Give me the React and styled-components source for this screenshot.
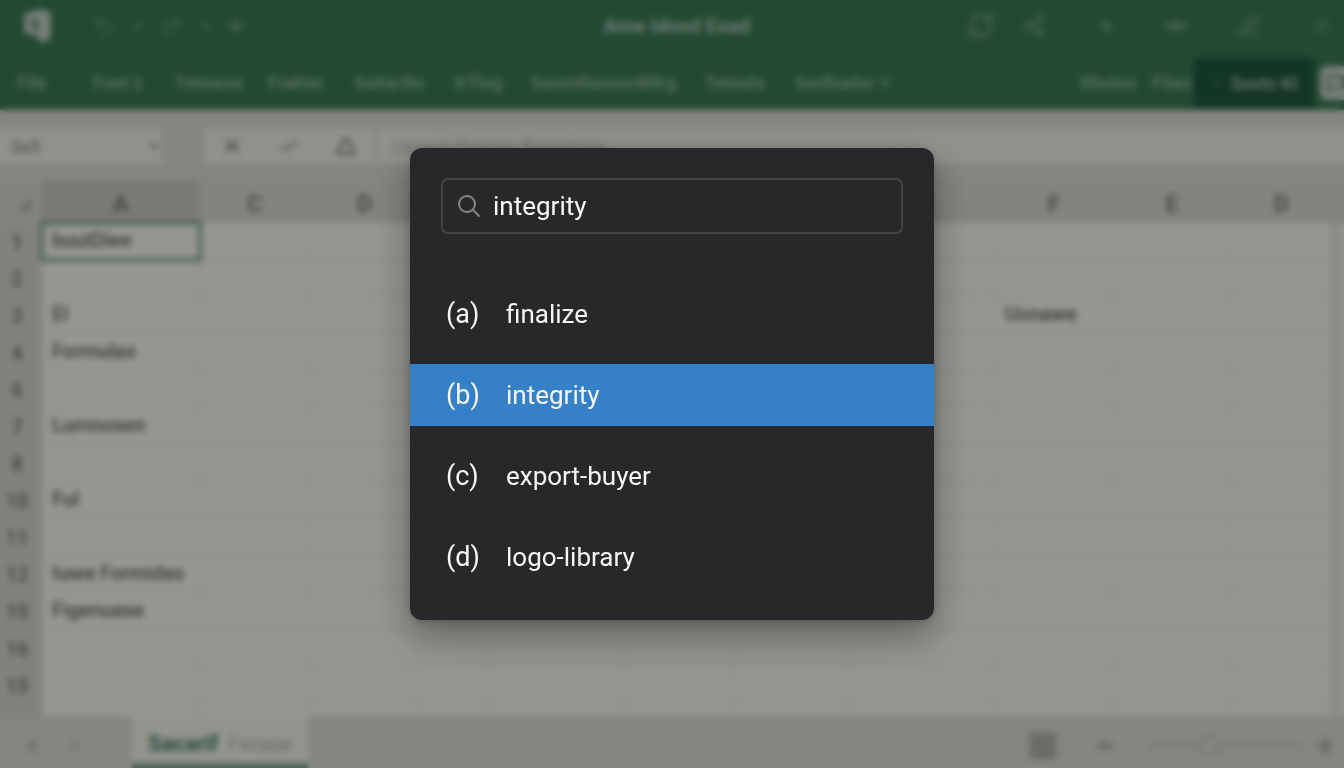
import React, { useState } from 'react'
import styled, { createGlobalStyle } from 'styled-components';
import {
    Undo2, Redo2, ChevronDown, ChevronLeft, ChevronRight, Plus, RefreshCw, Share2,
    Minus, X, Check, Triangle, LayoutGrid, MessageSquare, PenLine
} from 'lucide-react';

const menus = [
    { name: 'File', width: 76 },
    { name: 'Fuet z', width: 81 },
    { name: 'Tnteauw', width: 94 },
    { name: 'Fiakter', width: 86 },
    { name: 'Saitarttu', width: 101 },
    { name: 'KTlog', width: 76 },
    { name: 'SaomBauoonBllrg', width: 174 },
    { name: 'Teteats', width: 90 },
    { name: 'Gerlluator ˅', width: 110 },
];

const columns = [
    { name: 'A', width: 158 },
    { name: 'C', width: 110 },
    { name: 'D', width: 110 },
    { name: 'E', width: 70 },
    { name: 'F', width: 135 },
    { name: 'G', width: 110 },
    { name: 'H', width: 115 },
    { name: 'E', width: 145 },
    { name: 'F', width: 119 },
    { name: 'E', width: 117 },
    { name: 'D', width: 101 },
];

const rows = [
    { no: '1', cells: { 0: 'buutDiee' } },
    { no: '2', cells: {} },
    { no: '3', cells: { 0: 'El', 8: 'Uonawe' } },
    { no: '4', cells: { 0: 'Formulas' } },
    { no: '6', cells: {} },
    { no: '7', cells: { 0: 'Lumnosen' } },
    { no: '8', cells: {} },
    { no: '10', cells: { 0: 'Ful' } },
    { no: '11', cells: {} },
    { no: '12', cells: { 0: 'tuwe Formidas' } },
    { no: '15', cells: { 0: 'Figenuase' } },
    { no: '16', cells: {} },
    { no: '15', cells: {} },
    { no: '', cells: {} },
];

const commands = [
    { letter: '(a)', name: 'finalize' },
    { letter: '(b)', name: 'integrity' },
    { letter: '(c)', name: 'export-buyer' },
    { letter: '(d)', name: 'logo-library' },
];

const TitleBar = () => (
    <TitleRow>
        <TitleLeft>
            <Logo viewBox="0 0 30 34" aria-hidden="true">
                <path d="M3 6 L18 1 L28 4 V29 L19 33 L14 26 L3 24 Z" />
                <path className="mark" d="M9 11 h7 v10 h-4 z" />
            </Logo>
            <IconButton aria-label="Undo"><Undo2 size={24} /></IconButton>
            <IconButton aria-label="Undo list"><ChevronDown size={12} strokeWidth={5} /></IconButton>
            <IconButton aria-label="Redo"><Redo2 size={24} /></IconButton>
            <IconButton aria-label="Redo list"><ChevronDown size={12} strokeWidth={5} /></IconButton>
            <IconButton aria-label="Add"><Plus size={16} strokeWidth={7} /></IconButton>
        </TitleLeft>
        <Title>Ame Idnod Eoad</Title>
        <TitleRight>
            <IconButton aria-label="Sync"><RefreshCw size={28} strokeWidth={3} /></IconButton>
            <IconButton aria-label="Share"><Share2 size={24} strokeWidth={3} /></IconButton>
            <IconButton aria-label="New"><Plus size={18} strokeWidth={5} /></IconButton>
            <IconButton aria-label="Minimize"><Minus size={20} strokeWidth={10} /></IconButton>
            <IconButton aria-label="Edit"><PenLine size={22} strokeWidth={3} /></IconButton>
            <IconButton aria-label="Close"><X size={24} /></IconButton>
        </TitleRight>
    </TitleRow>
)

const Ribbon = () => (
    <RibbonRow>
        <Menus>
            {menus.map((item) => (
                <MenuButton key={item.name} $width={item.width}>{item.name}</MenuButton>
            ))}
        </Menus>
        <RibbonRight>
            <MenuButton $width={72}>Rbuinu</MenuButton>
            <MenuButton $width={42}>Filau</MenuButton>
            <SaveButton><ChevronDown size={12} /> Sovtn Kl</SaveButton>
            <NoteButton aria-label="Comments"><MessageSquare size={20} strokeWidth={3} /></NoteButton>
        </RibbonRight>
    </RibbonRow>
)

const FormulaBar = () => (
    <FormulaRow>
        <NameBox aria-label="Name box">
            <option>3a5</option>
        </NameBox>
        <FormulaTools>
            <IconButton aria-label="Cancel"><X size={20} strokeWidth={4} /></IconButton>
            <IconButton aria-label="Accept"><Check size={20} strokeWidth={3} /></IconButton>
            <IconButton aria-label="Function"><Triangle size={20} strokeWidth={4} /></IconButton>
        </FormulaTools>
        <FormulaInput aria-label="Formula" defaultValue="Ueraon Pounau Roanatoes" />
    </FormulaRow>
)

const Sheet = () => (
    <SheetSection>
        <SheetTable>
            <colgroup>
                <Col $width={42} />
                {columns.map((col, index) => <Col key={index} $width={col.width} />)}
                <Col $width={12} />
            </colgroup>
            <thead>
                <tr>
                    <HeadCell scope="col"><Corner viewBox="0 0 20 20" aria-hidden="true"><path d="M18 2 V18 H2 Z" /></Corner></HeadCell>
                    {columns.map((col, index) => (
                        <HeadCell key={index} scope="col" $active={index === 0}>{col.name}</HeadCell>
                    ))}
                    <HeadCell scope="col" />
                </tr>
            </thead>
            <tbody>
                {rows.map((row, rowIndex) => (
                    <tr key={rowIndex}>
                        <RowCell scope="row">{row.no}</RowCell>
                        {columns.map((col, index) => (
                            <Cell key={index} $active={rowIndex === 0 && index === 0}>{row.cells[index]}</Cell>
                        ))}
                        <Gutter />
                    </tr>
                ))}
            </tbody>
        </SheetTable>
    </SheetSection>
)

const StatusBar = () => (
    <StatusRow>
        <SheetNav>
            <IconButton aria-label="Previous sheet"><ChevronLeft size={16} strokeWidth={6} /></IconButton>
            <IconButton aria-label="Next sheet"><ChevronRight size={14} strokeWidth={4} /></IconButton>
        </SheetNav>
        <SheetTab><b>Sacarif</b> Fxnase</SheetTab>
        <StatusTools>
            <IconButton aria-label="Grid view"><LayoutGrid size={28} strokeWidth={5} /></IconButton>
            <IconButton aria-label="Zoom out"><Minus size={16} strokeWidth={10} /></IconButton>
            <Zoom type="range" aria-label="Zoom" min="0" max="100" defaultValue="38" />
            <IconButton aria-label="Zoom in"><Plus size={20} strokeWidth={6} /></IconButton>
        </StatusTools>
    </StatusRow>
)

const Palette = () => {
    const [query, setQuery] = useState('integrity');
    const [active, setActive] = useState(1);

    return (
        <Overlay>
            <Dialog role="dialog" aria-label="Commands">
                <SearchBox>
                    <SearchIcon viewBox="0 0 24 24" aria-hidden="true">
                        <circle cx="10" cy="10" r="8" />
                        <path d="M16 16 L22 22" />
                    </SearchIcon>
                    <SearchInput aria-label="Search" value={query} onChange={(e) => setQuery(e.target.value)} />
                </SearchBox>
                <CommandList>
                    {commands.map((item, index) => (
                        <li key={item.letter}>
                            <CommandButton $active={index === active} onClick={() => setActive(index)}>
                                <CommandLetter>{item.letter}</CommandLetter>
                                {item.name}
                            </CommandButton>
                        </li>
                    ))}
                </CommandList>
            </Dialog>
        </Overlay>
    )
}

const App = () => (
    <>
        <GlobalStyle />
        <Workbook>
            <TitleBar />
            <Ribbon />
            <FormulaBar />
            <Sheet />
            <StatusBar />
        </Workbook>
        <Palette />
    </>
)

const GlobalStyle = createGlobalStyle`
  * {
    box-sizing: border-box;
  }
  body {
    margin: 0;
    font-family: Roboto, sans-serif;
    overflow: hidden;
  }
  button, input, select {
    font-family: inherit;
  }
`
const Workbook = styled.div`
  display: flex;
  flex-direction: column;
  height: 100vh;
  background: #dedfd4;
`
const TitleRow = styled.header`
  display: grid;
  grid-template-columns: 1fr auto 1fr;
  align-items: center;
  height: 56px;
  padding: 0 10px 4px 20px;
  background: #3a7b54;
  color: #6f9b80;
`
const TitleLeft = styled.div`
  display: flex;
  align-items: center;
  gap: 16px;
`
const TitleRight = styled.div`
  display: flex;
  align-items: center;
  justify-content: flex-end;
  gap: 51px;

  button:first-child {
    margin-right: -24px;
  }
`
const Logo = styled.svg`
  width: 34px;
  height: 36px;
  margin-right: 22px;
  fill: #c4d2c8;

  .mark {
    fill: #5d8a70;
  }
`
const IconButton = styled.button`
  display: flex;
  padding: 0;
  border: 0;
  background: none;
  color: inherit;
`
const Title = styled.h1`
  margin: 0;
  font-size: 20px;
  font-weight: 700;
  line-height: 24px;
  color: #b4cabc;
`
const RibbonRow = styled.nav`
  display: flex;
  justify-content: space-between;
  height: 54px;
  background: #3a7b54;
`
const Menus = styled.div`
  display: flex;
  padding-left: 17px;
`
const MenuButton = styled.button`
  width: ${(props) => props.$width}px;
  padding: 0;
  border: 0;
  background: none;
  color: #93b5a0;
  font-size: 18px;
  font-weight: 600;
  line-height: 24px;
  text-align: left;
  white-space: nowrap;
`
const RibbonRight = styled.div`
  display: flex;
  align-items: stretch;
  padding-top: 2px;
  padding-bottom: 2px;
`
const SaveButton = styled.button`
  display: flex;
  align-items: center;
  justify-content: center;
  gap: 8px;
  width: 120px;
  padding: 0;
  border: 0;
  background: #1f5a3d;
  color: #a4bfb0;
  font-size: 18px;
  font-weight: 600;
`
const NoteButton = styled.button`
  display: flex;
  align-self: center;
  align-items: center;
  width: 24px;
  height: 34px;
  margin-left: 6px;
  padding: 0 0 0 6px;
  border: 0;
  border-radius: 8px 0 0 8px;
  background: #c9d3ca;
  color: #6b8a78;
`
const FormulaRow = styled.div`
  display: flex;
  gap: 4px;
  height: 70px;
  padding: 18px 0 16px;
  background: #dedfd4;
  color: #9b9c94;
`
const NameBox = styled.select`
  width: 162px;
  margin-right: 38px;
  padding: 0 6px;
  border: 0;
  background: #f2f3ea;
  color: #85867e;
  font-size: 18px;
`
const FormulaTools = styled.div`
  display: flex;
  align-items: center;
  justify-content: space-around;
  width: 170px;
  background: #f2f3ea;
`
const FormulaInput = styled.input`
  flex: 1;
  min-width: 0;
  padding: 0 16px;
  border: 0;
  background: #f2f3ea;
  color: #b5b6ae;
  font-size: 18px;
`
const SheetSection = styled.main`
  flex: 1;
  min-height: 0;
  overflow: hidden;
`
const SheetTable = styled.table`
  width: 100%;
  table-layout: fixed;
  border-collapse: separate;
  border-spacing: 0;
  background: #fafbf2;
`
const Col = styled.col`
  width: ${(props) => props.$width}px;
`
const HeadCell = styled.th`
  height: 43px;
  padding: 4px 0 0;
  background: ${(props) => (props.$active ? '#cbccc2' : '#dcddd3')};
  border-right: 1px solid #d4d5cb;
  color: #7c7c75;
  font-size: 24px;
  font-weight: 600;
  line-height: 28px;
`
const Corner = styled.svg`
  display: block;
  width: 20px;
  height: 20px;
  margin-left: 14px;
  fill: #b9bab1;
`
const RowCell = styled.th`
  height: 37px;
  padding: 0 8px 0 0;
  background: #d8d9cf;
  color: #7c7c75;
  font-size: 20px;
  font-weight: 600;
  line-height: 24px;
`
const Cell = styled.td`
  height: 37px;
  padding: 0 10px;
  border-right: 2px solid #f1f2ea;
  border-bottom: 3px solid #f1f2ea;
  outline: ${(props) => (props.$active ? '4px solid #7fa890' : 'none')};
  outline-offset: -2px;
  color: #66665f;
  font-size: 20px;
  font-weight: 500;
  line-height: 24px;
  white-space: nowrap;
`
const Gutter = styled.td`
  border-left: 3px solid #dcddd4;
  background: #f0f1e8;
`
const StatusRow = styled.footer`
  display: flex;
  height: 52px;
  background: #dedfd4;
  color: #b2b3aa;
`
const SheetNav = styled.div`
  display: flex;
  align-items: center;
  gap: 28px;
  width: 132px;
  padding: 8px 0 0 24px;
`
const SheetTab = styled.button`
  display: flex;
  align-items: center;
  gap: 10px;
  padding: 8px 16px 0;
  border: 0;
  border-bottom: 5px solid #84a693;
  background: #f6f7ee;
  color: #b0b1a8;
  font-size: 20px;

  b {
    color: #418260;
    font-size: 22px;
  }
`
const StatusTools = styled.div`
  display: flex;
  align-items: center;
  gap: 40px;
  margin-left: auto;
  padding: 8px 9px 0 0;
`
const Zoom = styled.input`
  appearance: none;
  width: 154px;
  height: 4px;
  margin: 0 -28px 0 -4px;
  background: #cfd0c6;

  &::-webkit-slider-thumb {
    appearance: none;
    width: 22px;
    height: 22px;
    border: 4px solid #cfd0c6;
    border-radius: 50%;
    background: #e0e1d8;
  }
`
const Overlay = styled.div`
  position: fixed;
  inset: 0;
  display: grid;
  place-items: center;
  background: rgba(0, 0, 0, 0.4);
  backdrop-filter: blur(3px);
`
const Dialog = styled.div`
  width: 524px;
  max-width: 100%;
  padding: 30px 0 32px;
  border-radius: 12px;
  background: #28282a;
  box-shadow: 0 16px 40px rgba(0, 0, 0, 0.36), 0 2px 8px rgba(0, 0, 0, 0.2);
`
const SearchBox = styled.div`
  display: flex;
  align-items: center;
  gap: 12px;
  height: 56px;
  margin: 0 31px 49px;
  padding: 0 14px;
  border: 2px solid #444446;
  border-radius: 7px;
`
const SearchIcon = styled.svg`
  flex: none;
  width: 24px;
  height: 24px;
  fill: none;
  stroke: #868688;
  stroke-width: 2;
  stroke-linecap: round;
`
const SearchInput = styled.input`
  flex: 1;
  min-width: 0;
  padding: 0;
  border: 0;
  outline: 0;
  background: none;
  color: #fafaf8;
  font-size: 26px;
  line-height: 32px;
`
const CommandList = styled.ul`
  display: grid;
  gap: 19px;
  margin: 0;
  padding: 0;
  list-style: none;
`
const CommandButton = styled.button`
  display: flex;
  align-items: center;
  width: 100%;
  height: 62px;
  padding: 0 36px;
  border: 0;
  background: ${(props) => (props.$active ? '#3580c6' : 'transparent')};
  color: #f6f6f2;
  font-size: 26px;
  line-height: 32px;
  text-align: left;
`
const CommandLetter = styled.span`
  width: 60px;
  font-size: 27px;
`

export default App
